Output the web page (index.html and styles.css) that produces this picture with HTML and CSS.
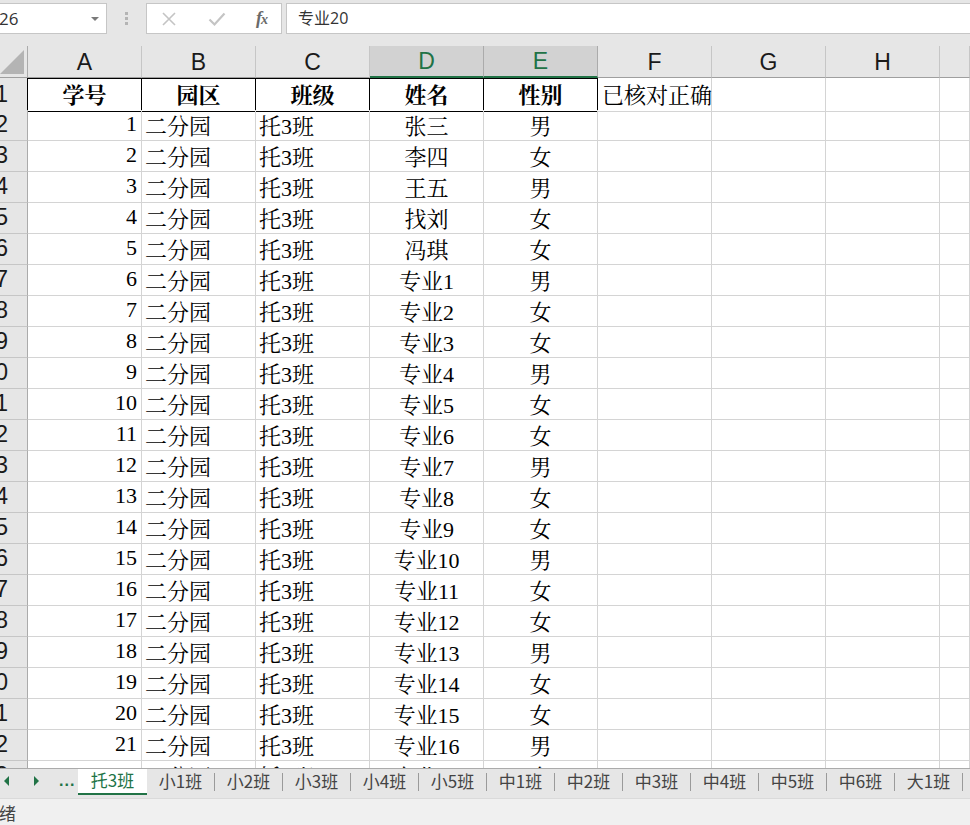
FILE: index.html
```html
<!DOCTYPE html>
<html lang="zh-CN">
<head>
<meta charset="utf-8">
<title>托3班</title>
<link rel="stylesheet" href="styles.css">
</head>
<body>
<div class="app">
  <div class="fbar">
    <div class="namebox"><span class="nbtext">26</span><svg class="caret" width="8" height="5" viewBox="0 0 8 5"><polygon points="0,0 8,0 4,4" fill="#7a7a7a"/></svg></div>
    <div class="grip"><i></i><i></i><i></i></div>
    <div class="fxbox">
      <svg width="16" height="16" viewBox="0 0 16 16"><path d="M2 2 L14 14 M14 2 L2 14" stroke="#c4c4c4" stroke-width="1.6" fill="none"/></svg>
      <svg width="18" height="16" viewBox="0 0 18 16"><path d="M1.5 8.5 L6.5 13.5 L16.5 2.5" stroke="#c4c4c4" stroke-width="2.2" fill="none"/></svg>
      <span class="fx">f<span class="fxx">x</span></span>
    </div>
    <div class="finput">专业20</div>
  </div>

  <div class="sheet">
    <div class="row hrow">
      <div class="corner"><svg width="27" height="31" viewBox="0 0 27 31"><polygon points="0,28 24,28 24,4" fill="#b4b4b4"/></svg></div>
      <div class="ch">A</div><div class="ch">B</div><div class="ch">C</div><div class="ch sel">D</div><div class="ch sel">E</div><div class="ch">F</div><div class="ch">G</div><div class="ch">H</div><div class="ch"></div>
    </div>

    <div class="row r1">
      <div class="rh rh1">1</div>
      <div class="c ctr b hb">学号</div><div class="c ctr b hb">园区</div><div class="c ctr b hb">班级</div><div class="c ctr b hb">姓名</div><div class="c ctr b hb">性别</div><div class="c over">已核对正确</div><div class="c"></div><div class="c"></div><div class="c"></div>
    </div>

    <div class="row"><div class="rh">2</div><div class="c num">1</div><div class="c">二分园</div><div class="c">托3班</div><div class="c ctr">张三</div><div class="c ctr">男</div><div class="c"></div><div class="c"></div><div class="c"></div><div class="c"></div></div>
    <div class="row"><div class="rh">3</div><div class="c num">2</div><div class="c">二分园</div><div class="c">托3班</div><div class="c ctr">李四</div><div class="c ctr">女</div><div class="c"></div><div class="c"></div><div class="c"></div><div class="c"></div></div>
    <div class="row"><div class="rh">4</div><div class="c num">3</div><div class="c">二分园</div><div class="c">托3班</div><div class="c ctr">王五</div><div class="c ctr">男</div><div class="c"></div><div class="c"></div><div class="c"></div><div class="c"></div></div>
    <div class="row"><div class="rh">5</div><div class="c num">4</div><div class="c">二分园</div><div class="c">托3班</div><div class="c ctr">找刘</div><div class="c ctr">女</div><div class="c"></div><div class="c"></div><div class="c"></div><div class="c"></div></div>
    <div class="row"><div class="rh">6</div><div class="c num">5</div><div class="c">二分园</div><div class="c">托3班</div><div class="c ctr">冯琪</div><div class="c ctr">女</div><div class="c"></div><div class="c"></div><div class="c"></div><div class="c"></div></div>
    <div class="row"><div class="rh">7</div><div class="c num">6</div><div class="c">二分园</div><div class="c">托3班</div><div class="c ctr">专业1</div><div class="c ctr">男</div><div class="c"></div><div class="c"></div><div class="c"></div><div class="c"></div></div>
    <div class="row"><div class="rh">8</div><div class="c num">7</div><div class="c">二分园</div><div class="c">托3班</div><div class="c ctr">专业2</div><div class="c ctr">女</div><div class="c"></div><div class="c"></div><div class="c"></div><div class="c"></div></div>
    <div class="row"><div class="rh">9</div><div class="c num">8</div><div class="c">二分园</div><div class="c">托3班</div><div class="c ctr">专业3</div><div class="c ctr">女</div><div class="c"></div><div class="c"></div><div class="c"></div><div class="c"></div></div>
    <div class="row"><div class="rh">10</div><div class="c num">9</div><div class="c">二分园</div><div class="c">托3班</div><div class="c ctr">专业4</div><div class="c ctr">男</div><div class="c"></div><div class="c"></div><div class="c"></div><div class="c"></div></div>
    <div class="row"><div class="rh">11</div><div class="c num">10</div><div class="c">二分园</div><div class="c">托3班</div><div class="c ctr">专业5</div><div class="c ctr">女</div><div class="c"></div><div class="c"></div><div class="c"></div><div class="c"></div></div>
    <div class="row"><div class="rh">12</div><div class="c num">11</div><div class="c">二分园</div><div class="c">托3班</div><div class="c ctr">专业6</div><div class="c ctr">女</div><div class="c"></div><div class="c"></div><div class="c"></div><div class="c"></div></div>
    <div class="row"><div class="rh">13</div><div class="c num">12</div><div class="c">二分园</div><div class="c">托3班</div><div class="c ctr">专业7</div><div class="c ctr">男</div><div class="c"></div><div class="c"></div><div class="c"></div><div class="c"></div></div>
    <div class="row"><div class="rh">14</div><div class="c num">13</div><div class="c">二分园</div><div class="c">托3班</div><div class="c ctr">专业8</div><div class="c ctr">女</div><div class="c"></div><div class="c"></div><div class="c"></div><div class="c"></div></div>
    <div class="row"><div class="rh">15</div><div class="c num">14</div><div class="c">二分园</div><div class="c">托3班</div><div class="c ctr">专业9</div><div class="c ctr">女</div><div class="c"></div><div class="c"></div><div class="c"></div><div class="c"></div></div>
    <div class="row"><div class="rh">16</div><div class="c num">15</div><div class="c">二分园</div><div class="c">托3班</div><div class="c ctr">专业10</div><div class="c ctr">男</div><div class="c"></div><div class="c"></div><div class="c"></div><div class="c"></div></div>
    <div class="row"><div class="rh">17</div><div class="c num">16</div><div class="c">二分园</div><div class="c">托3班</div><div class="c ctr">专业11</div><div class="c ctr">女</div><div class="c"></div><div class="c"></div><div class="c"></div><div class="c"></div></div>
    <div class="row"><div class="rh">18</div><div class="c num">17</div><div class="c">二分园</div><div class="c">托3班</div><div class="c ctr">专业12</div><div class="c ctr">女</div><div class="c"></div><div class="c"></div><div class="c"></div><div class="c"></div></div>
    <div class="row"><div class="rh">19</div><div class="c num">18</div><div class="c">二分园</div><div class="c">托3班</div><div class="c ctr">专业13</div><div class="c ctr">男</div><div class="c"></div><div class="c"></div><div class="c"></div><div class="c"></div></div>
    <div class="row"><div class="rh">20</div><div class="c num">19</div><div class="c">二分园</div><div class="c">托3班</div><div class="c ctr">专业14</div><div class="c ctr">女</div><div class="c"></div><div class="c"></div><div class="c"></div><div class="c"></div></div>
    <div class="row"><div class="rh">21</div><div class="c num">20</div><div class="c">二分园</div><div class="c">托3班</div><div class="c ctr">专业15</div><div class="c ctr">女</div><div class="c"></div><div class="c"></div><div class="c"></div><div class="c"></div></div>
    <div class="row"><div class="rh">22</div><div class="c num">21</div><div class="c">二分园</div><div class="c">托3班</div><div class="c ctr">专业16</div><div class="c ctr">男</div><div class="c"></div><div class="c"></div><div class="c"></div><div class="c"></div></div>
    <div class="row"><div class="rh">23</div><div class="c num">22</div><div class="c">二分园</div><div class="c">托3班</div><div class="c ctr">专业17</div><div class="c ctr">女</div><div class="c"></div><div class="c"></div><div class="c"></div><div class="c"></div></div>
  </div>

  <div class="tabs">
    <div class="nav">
      <svg width="8" height="10" viewBox="0 0 8 10"><polygon points="6,0 6,10 1,5" fill="#217346"/></svg>
      <svg width="8" height="10" viewBox="0 0 8 10"><polygon points="2,0 2,10 7,5" fill="#217346"/></svg>
      <span class="more">...</span>
    </div>
    <div class="tab active"><span class="tl">托3班</span></div>
    <div class="tab"><span class="tl">小1班</span><span class="sep"></span></div>
    <div class="tab"><span class="tl">小2班</span><span class="sep"></span></div>
    <div class="tab"><span class="tl">小3班</span><span class="sep"></span></div>
    <div class="tab"><span class="tl">小4班</span><span class="sep"></span></div>
    <div class="tab"><span class="tl">小5班</span><span class="sep"></span></div>
    <div class="tab"><span class="tl">中1班</span><span class="sep"></span></div>
    <div class="tab"><span class="tl">中2班</span><span class="sep"></span></div>
    <div class="tab"><span class="tl">中3班</span><span class="sep"></span></div>
    <div class="tab"><span class="tl">中4班</span><span class="sep"></span></div>
    <div class="tab"><span class="tl">中5班</span><span class="sep"></span></div>
    <div class="tab"><span class="tl">中6班</span><span class="sep"></span></div>
    <div class="tab"><span class="tl">大1班</span><span class="sep"></span></div>
  </div>

  <div class="status"><span class="st">就绪</span></div>
</div>
</body>
</html>
```

FILE: styles.css
```css
html, body {
  margin: 0;
  padding: 0;
  width: 970px;
  height: 825px;
  overflow: hidden;
  background: #e6e6e6;
  font-family: "Liberation Serif", "Noto Serif CJK SC", "Noto Sans CJK SC", serif;
}

.app {
  display: flex;
  flex-direction: column;
  width: 970px;
  height: 825px;
  overflow: hidden;
}

/* formula bar */
.fbar {
  height: 46px;
  flex: none;
  display: flex;
  align-items: flex-start;
  padding-top: 3px;
  box-sizing: border-box;
  background: #e6e6e6;
  font-family: "Open Sans", "Noto Sans CJK SC", sans-serif;
}
.namebox {
  width: 107px;
  height: 31px;
  box-sizing: border-box;
  background: #fff;
  border: 1px solid #c6c6c6;
  border-left: none;
  display: flex;
  align-items: center;
  justify-content: space-between;
  padding-right: 7px;
  font-size: 17px;
  color: #333;
}
.nbtext { margin-left: -1px; }
.caret { margin-top: 2px; }
.grip {
  width: 39px;
  height: 31px;
  display: flex;
  flex-direction: column;
  align-items: center;
  justify-content: center;
  gap: 2px;
}
.grip i {
  display: block;
  width: 3px;
  height: 3px;
  background: #b4b4b4;
}
.fxbox {
  width: 136px;
  height: 31px;
  box-sizing: border-box;
  background: #fff;
  border: 1px solid #c6c6c6;
  display: flex;
  align-items: center;
  justify-content: space-between;
  padding: 0 14px 0 14px;
}
.fx {
  font-family: "Liberation Serif", serif;
  font-style: italic;
  font-weight: bold;
  font-size: 18px;
  color: #6a6a6a;
  letter-spacing: -1px;
}
.fxx { font-size: 14px; }
.finput {
  flex: 1;
  height: 31px;
  margin-left: 4px;
  box-sizing: border-box;
  background: #fff;
  border: 1px solid #c6c6c6;
  border-right: none;
  padding-left: 11px;
  line-height: 29px;
  font-size: 16px;
  color: #333;
}

/* sheet */
.sheet {
  flex: 1 1 auto;
  min-height: 0;
  background: #fff;
  overflow: hidden;
}
.row {
  display: grid;
  grid-template-columns: 28px repeat(8, 114px) 1fr;
  height: 31px;
}
.row.r1 { height: 32px; }
.row.hrow { height: 32px; background: #e6e6e6; }

.corner {
  box-sizing: border-box;
  border-right: 1px solid #ababab;
  border-bottom: 1px solid #9f9f9f;
  overflow: hidden;
}
.corner svg { display: block; }
.ch {
  box-sizing: border-box;
  border-right: 1px solid #c6c6c6;
  border-bottom: 1px solid #9f9f9f;
  display: flex;
  align-items: center;
  justify-content: center;
  font-family: "Liberation Sans", sans-serif;
  font-size: 23px;
  color: #1a1a1a;
  padding-top: 1px;
}
.ch.sel {
  background: #d2d2d2;
  border-right-color: #ababab;
  border-bottom: 2px solid #217346;
  color: #217346;
}

.rh {
  box-sizing: border-box;
  background: #e6e6e6;
  border-right: 1px solid #ababab;
  border-bottom: 1px solid #c6c6c6;
  display: flex;
  justify-content: flex-end;
  align-items: center;
  padding-right: 19px;
  padding-bottom: 1px;
  overflow: hidden;
  white-space: nowrap;
  font-family: "Liberation Sans", sans-serif;
  font-size: 23px;
  color: #1a1a1a;
}
.rh1 { border-right-color: #000; }

.c {
  box-sizing: border-box;
  border-right: 1px solid #d4d4d4;
  border-bottom: 1px solid #d4d4d4;
  display: flex;
  align-items: center;
  padding: 0 3px 2px 3px;
  white-space: nowrap;
  overflow: hidden;
  font-size: 22px;
  color: #000;
}
.c.num { justify-content: flex-end; padding-right: 4px; }
.c.ctr { justify-content: center; padding-left: 0; padding-right: 0; }
.c.b { font-weight: bold; }
.c.hb {
  border-right-color: #000;
  border-bottom-color: #000;
  box-shadow: inset 0 1px 0 #000;
}
.c.over { padding-left: 4px; overflow: visible; }

/* sheet tabs */
.tabs {
  height: 30px;
  flex: none;
  box-sizing: border-box;
  border-top: 1px solid #ababab;
  background: #e6e6e6;
  display: flex;
  align-items: flex-start;
  font-family: "Noto Sans CJK SC", sans-serif;
  font-size: 17px;
  color: #444;
  overflow: hidden;
}
.nav {
  width: 78px;
  height: 24px;
  flex: none;
  display: flex;
  align-items: center;
  padding-left: 3px;
  box-sizing: border-box;
  gap: 21px;
}
.nav svg { display: block; }
.more {
  color: #217346;
  font-family: "Liberation Sans", sans-serif;
  font-size: 16px;
  font-weight: bold;
  margin-left: -2px;
  letter-spacing: 1px;
}
.tab {
  width: 68px;
  height: 23px;
  flex: none;
  display: flex;
  align-items: center;
}
.tl {
  flex: 1;
  text-align: center;
  line-height: 22px;
}
.sep {
  width: 1px;
  height: 18px;
  background: #9a9a9a;
  flex: none;
  margin-top: 2px;
}
.tab.active {
  width: 69px;
  height: 27px;
  margin-top: -1px;
  background: #fff;
  box-sizing: border-box;
  border-bottom: 2px solid #217346;
  color: #217346;
  padding-bottom: 1px;
}

.status {
  flex: none;
  height: 27px;
  box-sizing: border-box;
  background: #f0f0f0;
  border-top: 1px solid #dadada;
  overflow: hidden;
  display: flex;
  align-items: center;
  font-family: "Noto Sans CJK SC", sans-serif;
  font-size: 17px;
  color: #444;
}
.st { margin-left: -18px; white-space: nowrap; }
```
